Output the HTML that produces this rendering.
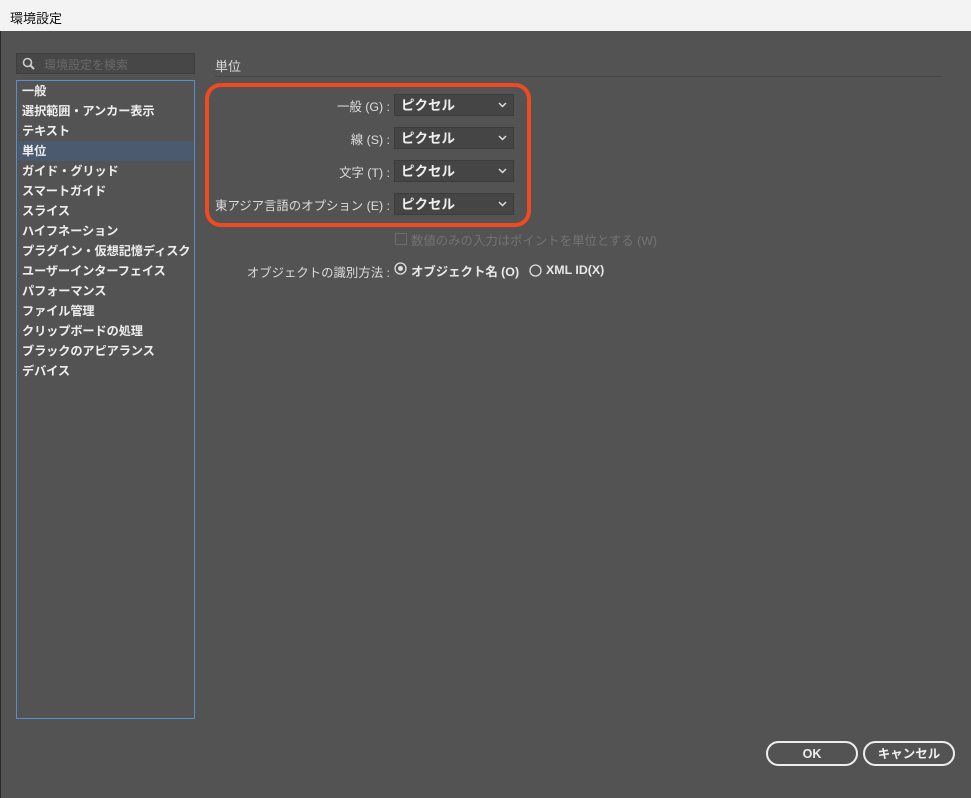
<html><head><style>
body{margin:0;width:971px;height:798px;background:#535353;font-family:"Liberation Sans","Noto Sans CJK JP",sans-serif;font-size:13px;color:#e8e8e8;position:relative;overflow:hidden}
.t{position:absolute;left:0;top:0;width:971px;height:31px;background:#f3f3f3;color:#111;font-size:13px}
.a{position:absolute}
.li{position:absolute;left:22px;height:20px;line-height:20px;color:#eee;font-weight:bold;font-size:12.2px;letter-spacing:-0.1px}
.dd{position:absolute;left:394px;width:120px;height:22px;background:#454545;border:1px solid #3c3c3c;box-sizing:border-box;line-height:21px;padding-left:6px;font-weight:bold;color:#eee;font-size:13.5px}
.dd svg{position:absolute;right:6px;top:7px}
.lb{position:absolute;right:581px;text-align:right;color:#ddd;white-space:nowrap;font-size:12.4px}
.btn{position:absolute;top:741px;height:25px;border:2px solid #eee;border-radius:13px;box-sizing:border-box;text-align:center;line-height:22px;font-weight:bold;color:#eee;font-size:12.5px}
</style></head><body>
<div class="t"><span class="a" style="left:10px;top:8px">環境設定</span></div>
<div class="a" style="left:0;top:31px;width:1px;height:767px;background:#2a2a2a"></div>
<div class="a" style="left:16px;top:53px;width:179px;height:21px;background:#474747;border:1px solid #3e3e3e;box-sizing:border-box"></div>
<svg class="a" style="left:22px;top:57px" width="14" height="14"><circle cx="5.5" cy="5.5" r="4" fill="none" stroke="#ccc" stroke-width="1.6"/><path d="M8.5 8.5L12 12" stroke="#ccc" stroke-width="2"/></svg>
<span class="a" style="left:44px;top:56px;color:#6a6a6a;font-size:12px">環境設定を検索</span>
<div class="a" style="left:16px;top:80px;width:179px;height:639px;border:1px solid #5b8fc9;box-sizing:border-box;background:#535353"></div>
<div class="a" style="left:18px;top:141px;width:175px;height:20px;background:#4b5a6e"></div>
<div class="li" style="top:81px">一般</div>
<div class="li" style="top:101px">選択範囲・アンカー表示</div>
<div class="li" style="top:121px">テキスト</div>
<div class="li" style="top:141px">単位</div>
<div class="li" style="top:161px">ガイド・グリッド</div>
<div class="li" style="top:181px">スマートガイド</div>
<div class="li" style="top:201px">スライス</div>
<div class="li" style="top:221px">ハイフネーション</div>
<div class="li" style="top:241px">プラグイン・仮想記憶ディスク</div>
<div class="li" style="top:261px">ユーザーインターフェイス</div>
<div class="li" style="top:281px">パフォーマンス</div>
<div class="li" style="top:301px">ファイル管理</div>
<div class="li" style="top:321px">クリップボードの処理</div>
<div class="li" style="top:341px">ブラックのアピアランス</div>
<div class="li" style="top:361px">デバイス</div>
<span class="a" style="left:215px;top:56px;color:#ddd">単位</span>
<div class="a" style="left:215px;top:76px;width:727px;height:1px;background:#474747"></div>
<div class="a" style="left:205px;top:83px;width:326px;height:144px;border:4px solid #f04a24;border-radius:16px;box-sizing:border-box"></div>
<span class="lb" style="top:97px">一般 (G) :</span>
<span class="lb" style="top:130px">線 (S) :</span>
<span class="lb" style="top:163px">文字 (T) :</span>
<span class="lb" style="top:196px">東アジア言語のオプション (E) :</span>
<div class="dd" style="top:94px">ピクセル<svg width="9" height="6"><path d="M1 1l3.5 3.5L8 1" fill="none" stroke="#ddd" stroke-width="1.5"/></svg></div>
<div class="dd" style="top:127px">ピクセル<svg width="9" height="6"><path d="M1 1l3.5 3.5L8 1" fill="none" stroke="#ddd" stroke-width="1.5"/></svg></div>
<div class="dd" style="top:160px">ピクセル<svg width="9" height="6"><path d="M1 1l3.5 3.5L8 1" fill="none" stroke="#ddd" stroke-width="1.5"/></svg></div>
<div class="dd" style="top:193px">ピクセル<svg width="9" height="6"><path d="M1 1l3.5 3.5L8 1" fill="none" stroke="#ddd" stroke-width="1.5"/></svg></div>
<div class="a" style="left:395px;top:233px;width:10px;height:10px;border:1px solid #6c6c6c"></div>
<span class="a" style="left:411px;top:231px;color:#737373;font-size:12.4px">数値のみの入力はポイントを単位とする (W)</span>
<span class="lb" style="top:263px">オブジェクトの識別方法 :</span>
<svg class="a" style="left:394px;top:262px" width="13" height="13"><circle cx="6.5" cy="6.5" r="5.5" fill="none" stroke="#ddd" stroke-width="1.3"/><circle cx="6.5" cy="6.5" r="2.5" fill="#ddd"/></svg>
<span class="a" style="left:411px;top:262px;font-weight:bold;font-size:12.4px">オブジェクト名 (O)</span>
<svg class="a" style="left:529px;top:264px" width="13" height="13"><circle cx="6.5" cy="6.5" r="5.5" fill="none" stroke="#ddd" stroke-width="1.3"/></svg>
<span class="a" style="left:546px;top:263px;font-weight:bold;font-size:12.4px">XML ID(X)</span>
<div class="btn" style="left:766px;width:92px">OK</div>
<div class="btn" style="left:863px;width:92px">キャンセル</div>
</body></html>
